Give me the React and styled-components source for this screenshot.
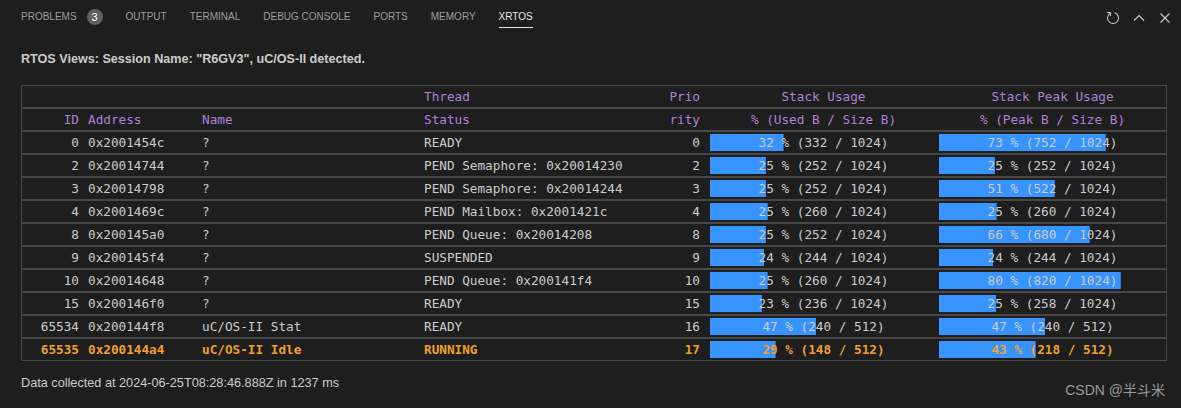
import React from 'react'
import styled, { createGlobalStyle } from 'styled-components'

const GlobalStyle = createGlobalStyle`
body {
    margin: 0;
    background: #1e1e1e;
}
`

const Panel = styled.div`
position: relative;
width: 1181px;
height: 408px;
overflow: hidden;
background: #1e1e1e;
color: #cccccc;
font-family: "Liberation Sans", Arial, sans-serif;
`

const TabBar = styled.div`
display: flex;
align-items: center;
justify-content: space-between;
height: 35px;
padding: 0 5px 0 21px;
`

const Tabs = styled.div`
display: flex;
align-items: center;
gap: 23px;
`

const Tab = styled.div`
display: inline-flex;
align-items: center;
line-height: 20px;
font-size: 10px;
text-transform: uppercase;
color: ${({ $active }) => ($active ? '#e7e7e7' : '#9d9d9d')};
border-bottom: 1px solid ${({ $active }) => ($active ? '#e7e7e7' : 'transparent')};
`

const Badge = styled.span`
display: inline-flex;
align-items: center;
justify-content: center;
min-width: 16px;
height: 16px;
margin-left: 10px;
border-radius: 8px;
background: #616161;
color: #ffffff;
font-size: 11px;
`

const Actions = styled.div`
display: flex;
gap: 4px;
`

const IconButton = styled.div`
display: flex;
align-items: center;
justify-content: center;
width: 22px;
height: 22px;
color: #cccccc;
`

const Title = styled.div`
margin-top: 15px;
padding: 0 21px;
line-height: 18px;
font-size: 12.6px;
font-weight: bold;
`

const Table = styled.table`
margin: 17px 0 0 21px;
width: 1146px;
table-layout: fixed;
border-collapse: separate;
border-spacing: 0;
border: 1px solid #474747;
font-family: "DejaVu Sans Mono", "Liberation Mono", monospace;
font-size: 12.7px;

tr + tr > td {
    border-top: 2px solid #474747;
}
`

const Row = styled.tr`
color: ${({ $running }) => ($running ? '#f0a030' : '#cccccc')};
font-weight: ${({ $running }) => ($running ? 'bold' : 'normal')};
`

const HeadRow = styled.tr`
color: #b180d7;
`

const Cell = styled.td`
height: 21px;
line-height: 21px;
padding: ${({ $pad }) => $pad || '0 4px'};
text-align: ${({ $align }) => $align || 'left'};
white-space: nowrap;
overflow: hidden;
vertical-align: middle;
`

const Meter = styled.div`
height: 17px;
line-height: 17px;
text-align: center;
white-space: pre;
background-image: linear-gradient(#3794ff, #3794ff);
background-repeat: no-repeat;
background-position: left center;
`

const Footer = styled.div`
margin-top: 13px;
padding: 0 21px;
line-height: 18px;
font-size: 12.7px;
`

const Watermark = styled.div`
position: absolute;
right: 16px;
bottom: 9px;
font-family: "Liberation Sans", "Noto Sans CJK SC", sans-serif;
font-size: 14px;
color: #9a9a9a;
`

const threads = [
    [0, '0x2001454c', '?', 'READY', 0, 332, 1024, 752, 1024],
    [2, '0x20014744', '?', 'PEND Semaphore: 0x20014230', 2, 252, 1024, 252, 1024],
    [3, '0x20014798', '?', 'PEND Semaphore: 0x20014244', 3, 252, 1024, 522, 1024],
    [4, '0x2001469c', '?', 'PEND Mailbox: 0x2001421c', 4, 260, 1024, 260, 1024],
    [8, '0x200145a0', '?', 'PEND Queue: 0x20014208', 8, 252, 1024, 680, 1024],
    [9, '0x200145f4', '?', 'SUSPENDED', 9, 244, 1024, 244, 1024],
    [10, '0x20014648', '?', 'PEND Queue: 0x200141f4', 10, 260, 1024, 820, 1024],
    [15, '0x200146f0', '?', 'READY', 15, 236, 1024, 258, 1024],
    [65534, '0x200144f8', 'uC/OS-II Stat', 'READY', 16, 240, 512, 240, 512],
    [65535, '0x200144a4', 'uC/OS-II Idle', 'RUNNING', 17, 148, 512, 218, 512],
]

const tabs = ['Problems', 'Output', 'Terminal', 'Debug Console', 'Ports', 'Memory', 'XRTOS']

const Usage = ({ used, size }) => {
    const pct = (used / size) * 100
    return (
        <Meter style={{ backgroundSize: `${pct}% 100%` }}>
            {`${Math.round(pct)} % (${used} / ${size})`}
        </Meter>
    )
}

const App = () => {
    return (
        <Panel>
            <GlobalStyle />
            <TabBar>
                <Tabs>
                    {tabs.map((t) => (
                        <Tab key={t} $active={t === 'XRTOS'}>
                            {t}
                            {t === 'Problems' && <Badge>3</Badge>}
                        </Tab>
                    ))}
                </Tabs>
                <Actions>
                    <IconButton>
                        <svg width="16" height="16" viewBox="0 0 16 16" fill="currentColor">
                            <path d="M4.681 3H2V2h3.5l.5.5V6H5V4a5 5 0 1 0 4.53-.761l.302-.954A6 6 0 1 1 4.681 3z" />
                        </svg>
                    </IconButton>
                    <IconButton>
                        <svg width="16" height="16" viewBox="0 0 16 16" fill="none" stroke="currentColor" strokeWidth="1.1">
                            <polyline points="3,10.5 8,5.5 13,10.5" />
                        </svg>
                    </IconButton>
                    <IconButton>
                        <svg width="16" height="16" viewBox="0 0 16 16" fill="none" stroke="currentColor" strokeWidth="1.1">
                            <line x1="3.5" y1="3.5" x2="12.5" y2="12.5" />
                            <line x1="12.5" y1="3.5" x2="3.5" y2="12.5" />
                        </svg>
                    </IconButton>
                </Actions>
            </TabBar>

            <Title>RTOS Views: Session Name: "R6GV3", uC/OS-II detected.</Title>

            <Table>
                <colgroup>
                    <col style={{ width: 62 }} />
                    <col style={{ width: 114 }} />
                    <col style={{ width: 222 }} />
                    <col style={{ width: 222 }} />
                    <col style={{ width: 66 }} />
                    <col style={{ width: 231 }} />
                    <col style={{ width: 227 }} />
                </colgroup>
                <tbody>
                    <HeadRow>
                        <Cell />
                        <Cell />
                        <Cell />
                        <Cell>Thread</Cell>
                        <Cell $align="right" $pad="0 8px 0 4px">Prio</Cell>
                        <Cell $align="center" $pad="0 2px">Stack Usage</Cell>
                        <Cell $align="center" $pad="0">Stack Peak Usage</Cell>
                    </HeadRow>
                    <HeadRow>
                        <Cell $align="right" $pad="0 5px 0 4px">ID</Cell>
                        <Cell>Address</Cell>
                        <Cell>Name</Cell>
                        <Cell>Status</Cell>
                        <Cell $align="right" $pad="0 8px 0 4px">rity</Cell>
                        <Cell $align="center" $pad="0 2px">% (Used B / Size B)</Cell>
                        <Cell $align="center" $pad="0">% (Peak B / Size B)</Cell>
                    </HeadRow>
                    {threads.map(([id, addr, name, status, prio, used, size, peak, peakSize]) => (
                        <Row key={id} $running={status === 'RUNNING'}>
                            <Cell $align="right" $pad="0 5px 0 4px">{id}</Cell>
                            <Cell>{addr}</Cell>
                            <Cell>{name}</Cell>
                            <Cell>{status}</Cell>
                            <Cell $align="right" $pad="0 8px 0 4px">{prio}</Cell>
                            <Cell $pad="0 2px">
                                <Usage used={used} size={size} />
                            </Cell>
                            <Cell $pad="0">
                                <Usage used={peak} size={peakSize} />
                            </Cell>
                        </Row>
                    ))}
                </tbody>
            </Table>

            <Footer>Data collected at 2024-06-25T08:28:46.888Z in 1237 ms</Footer>

            <Watermark>CSDN @半斗米</Watermark>
        </Panel>
    )
}

export default App
